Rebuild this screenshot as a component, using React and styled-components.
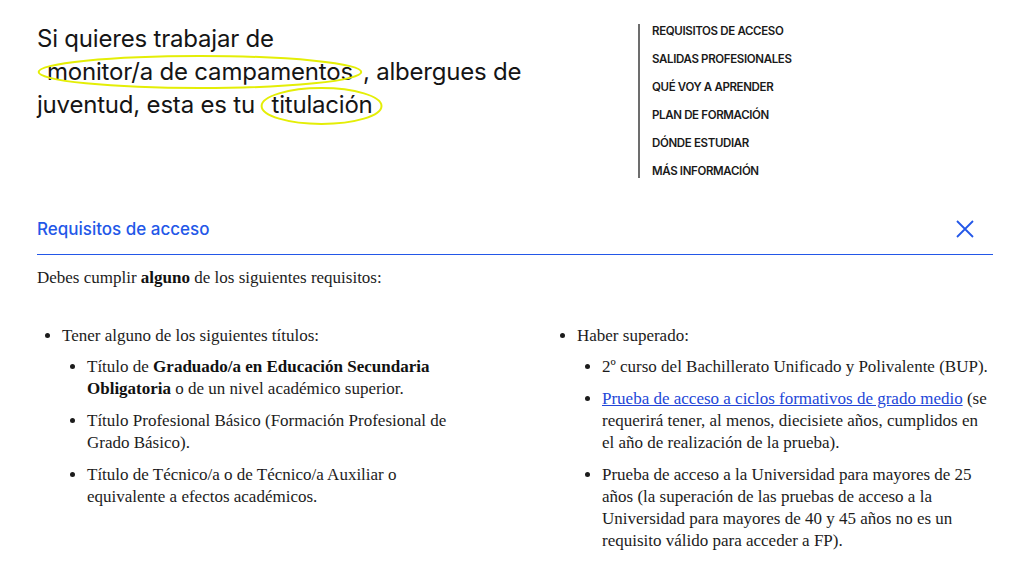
import React from 'react';
import styled, { createGlobalStyle } from 'styled-components';

const GlobalStyle = createGlobalStyle`
  body {
    margin: 0;
    background: #fff;
    color: #1a1a1a;
  }
`;

const Page = styled.div`
  width: 1024px;
  padding: 0 31px 0 37px;
  box-sizing: border-box;
`;

const Hero = styled.header`
  display: flex;
  align-items: flex-start;
  padding-top: 22px;
`;

const Headline = styled.h1`
  width: 601px;
  box-sizing: border-box;
  padding-right: 96px;
  margin: 0;
  font-family: Inter, "Liberation Sans", sans-serif;
  font-size: 24px;
  font-weight: 400;
  line-height: 33px;
  letter-spacing: -0.2px;
  color: #151515;
`;

const Mark = styled.span`
  position: relative;
  display: inline-block;
  padding: 0 10px;
  line-height: 33px;
`;

const MarkRing = styled.svg`
  position: absolute;
  left: 0;
  top: 50%;
  width: 100%;
  height: ${(p) => p.$h}px;
  transform: translateY(-50%) translateY(${(p) => p.$dy}px);
  overflow: visible;
  pointer-events: none;
`;

const Nav = styled.nav`
  margin-top: 2px;
  border-left: 2px solid #6d6d6d;
  padding-left: 12px;
  display: flex;
  flex-direction: column;
  gap: 14px;
`;

const NavLink = styled.a`
  font-family: Inter, "Liberation Sans", sans-serif;
  font-size: 11.5px;
  font-weight: 600;
  line-height: 14px;
  letter-spacing: -0.35px;
  color: #1a1a1a;
  text-decoration: none;
  text-transform: uppercase;
`;

const Panel = styled.section`
  margin-top: 26px;
`;

const PanelHead = styled.div`
  height: 50px;
  display: flex;
  align-items: center;
  justify-content: space-between;
  border-bottom: 1px solid #2357e8;
`;

const PanelTitle = styled.h2`
  margin: 0;
  font-family: Inter, "Liberation Sans", sans-serif;
  font-size: 17px;
  font-weight: 500;
  letter-spacing: 0;
  color: #2357e8;
`;

const CloseButton = styled.button`
  border: 0;
  background: none;
  padding: 0;
  margin-right: 18px;
  display: flex;
  cursor: pointer;
`;

const Body = styled.div`
  font-family: "Liberation Serif", "Times New Roman", serif;
  font-size: 17px;
  line-height: 22px;
  color: #1c1c1c;

  strong {
    font-weight: 700;
    color: #111;
  }
`;

const Intro = styled.p`
  margin: 12px 0 0;
`;

const Columns = styled.div`
  display: grid;
  grid-template-columns: 1fr 1fr;
  column-gap: 74px;
  margin-top: 36px;
`;

const List = styled.ul`
  margin: ${(p) => (p.$nested ? '9px 0 0' : '0')};
  padding-left: 25px;
  list-style: disc;
  display: flex;
  flex-direction: column;
  gap: 10px;
`;

const Item = styled.li`
  padding-left: 0;
`;

const Link = styled.a`
  color: #2346d8;
  text-decoration: underline;
`;

function Ring({ h, dy = 0 }) {
  return (
    <MarkRing $h={h} $dy={dy} viewBox="0 0 100 34" preserveAspectRatio="none">
      <ellipse
        cx="50"
        cy="17"
        rx="49.5"
        ry="16"
        fill="none"
        stroke="#e4ee06"
        strokeWidth="2"
        vectorEffect="non-scaling-stroke"
      />
    </MarkRing>
  );
}

const navItems = [
  'Requisitos de acceso',
  'Salidas profesionales',
  'Qué voy a aprender',
  'Plan de formación',
  'Dónde estudiar',
  'Más información',
];

export default function App() {
  return (
    <>
      <GlobalStyle />
      <Page>
        <Hero>
          <Headline>
            Si quieres trabajar de{' '}
            <Mark>
              monitor/a de campamentos
              <Ring h={34} />
            </Mark>
            , albergues de juventud, esta es tu{' '}
            <Mark>
              titulación
              <Ring h={38} dy={1} />
            </Mark>
          </Headline>
          <Nav>
            {navItems.map((item) => (
              <NavLink key={item} href="#">
                {item}
              </NavLink>
            ))}
          </Nav>
        </Hero>

        <Panel>
          <PanelHead>
            <PanelTitle>Requisitos de acceso</PanelTitle>
            <CloseButton aria-label="Cerrar">
              <svg width="20" height="20" viewBox="0 0 20 20">
                <path d="M2 2 L18 18 M18 2 L2 18" stroke="#2357e8" strokeWidth="1.8" fill="none" />
              </svg>
            </CloseButton>
          </PanelHead>
          <Body>
            <Intro>
              Debes cumplir <strong>alguno</strong> de los siguientes requisitos:
            </Intro>
            <Columns>
              <List>
                <Item>
                  Tener alguno de los siguientes títulos:
                  <List $nested>
                    <Item>
                      Título de <strong>Graduado/a en Educación Secundaria Obligatoria</strong> o de un
                      nivel académico superior.
                    </Item>
                    <Item>Título Profesional Básico (Formación Profesional de Grado Básico).</Item>
                    <Item>
                      Título de Técnico/a o de Técnico/a Auxiliar o equivalente a efectos académicos.
                    </Item>
                  </List>
                </Item>
              </List>
              <List>
                <Item>
                  Haber superado:
                  <List $nested>
                    <Item>2º curso del Bachillerato Unificado y Polivalente (BUP).</Item>
                    <Item>
                      <Link href="#">Prueba de acceso a ciclos formativos de grado medio</Link> (se
                      requerirá tener, al menos, diecisiete años, cumplidos en el año de realización
                      de la prueba).
                    </Item>
                    <Item>
                      Prueba de acceso a la Universidad para mayores de 25 años (la superación de las
                      pruebas de acceso a la Universidad para mayores de 40 y 45 años no es un
                      requisito válido para acceder a FP).
                    </Item>
                  </List>
                </Item>
              </List>
            </Columns>
          </Body>
        </Panel>
      </Page>
    </>
  );
}
